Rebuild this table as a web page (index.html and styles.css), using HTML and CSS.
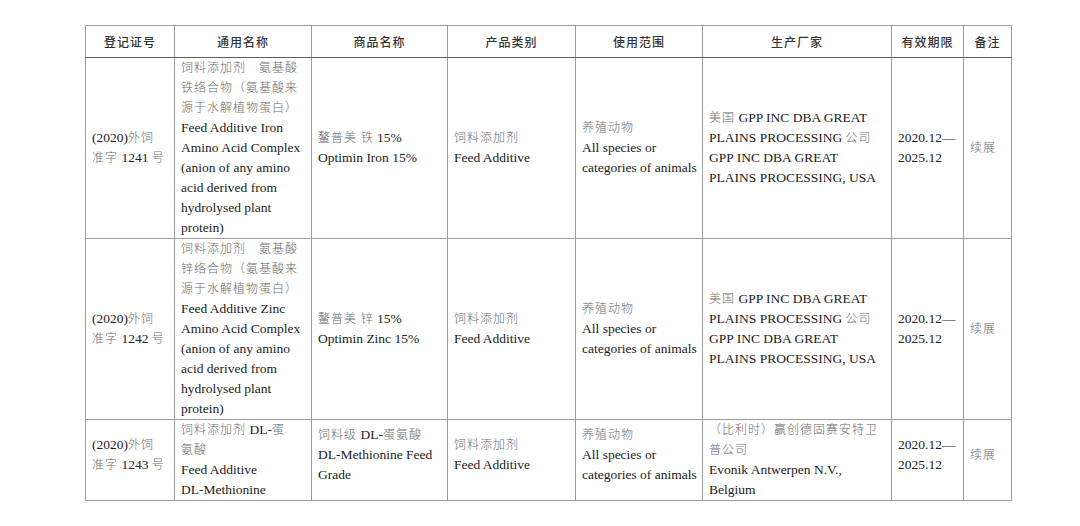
FILE: index.html
```html
<!DOCTYPE html>
<html lang="zh">
<head>
<meta charset="utf-8">
<title>登记证</title>
<link rel="stylesheet" href="styles.css">
</head>
<body>
<div class="page">
<table class="reg">
  <colgroup>
    <col class="c1"><col class="c2"><col class="c3"><col class="c4"><col class="c5"><col class="c6"><col class="c7"><col class="c8">
  </colgroup>
  <thead>
    <tr>
      <th>登记证号</th><th>通用名称</th><th>商品名称</th><th>产品类别</th><th>使用范围</th><th class="dark">生产厂家</th><th>有效期限</th><th>备注</th>
    </tr>
  </thead>
  <tbody>
    <tr class="r1">
      <td>(2020)<span class="zh">外饲</span><br><span class="zh">准字</span> 1241 <span class="zh">号</span></td>
      <td><span class="zh">饲料添加剂　氨基酸<br>铁络合物（氨基酸来<br>源于水解植物蛋白）</span><br>Feed Additive Iron<br>Amino Acid Complex<br>(anion of any amino<br>acid derived from<br>hydrolysed plant<br>protein)</td>
      <td><span class="zh">鳌普美 铁</span> 15%<br>Optimin Iron 15%</td>
      <td><span class="zh">饲料添加剂</span><br>Feed Additive</td>
      <td><span class="zh">养殖动物</span><br>All species or<br>categories of animals</td>
      <td class="dark"><span class="zh">美国</span> GPP INC DBA GREAT<br>PLAINS PROCESSING <span class="zh">公司</span><br>GPP INC DBA GREAT<br>PLAINS PROCESSING, USA</td>
      <td>2020.12—<br>2025.12</td>
      <td><span class="zh">续展</span></td>
    </tr>
    <tr class="r2">
      <td>(2020)<span class="zh">外饲</span><br><span class="zh">准字</span> 1242 <span class="zh">号</span></td>
      <td><span class="zh">饲料添加剂　氨基酸<br>锌络合物（氨基酸来<br>源于水解植物蛋白）</span><br>Feed Additive Zinc<br>Amino Acid Complex<br>(anion of any amino<br>acid derived from<br>hydrolysed plant<br>protein)</td>
      <td><span class="zh">鳌普美 锌</span> 15%<br>Optimin Zinc 15%</td>
      <td><span class="zh">饲料添加剂</span><br>Feed Additive</td>
      <td><span class="zh">养殖动物</span><br>All species or<br>categories of animals</td>
      <td class="dark"><span class="zh">美国</span> GPP INC DBA GREAT<br>PLAINS PROCESSING <span class="zh">公司</span><br>GPP INC DBA GREAT<br>PLAINS PROCESSING, USA</td>
      <td>2020.12—<br>2025.12</td>
      <td><span class="zh">续展</span></td>
    </tr>
    <tr class="r3">
      <td>(2020)<span class="zh">外饲</span><br><span class="zh">准字</span> 1243 <span class="zh">号</span></td>
      <td class="top"><span class="zh">饲料添加剂</span> DL-<span class="zh">蛋<br>氨酸</span><br>Feed Additive<br>DL-Methionine</td>
      <td><span class="zh">饲料级</span> DL-<span class="zh">蛋氨酸</span><br>DL-Methionine Feed<br>Grade</td>
      <td><span class="zh">饲料添加剂</span><br>Feed Additive</td>
      <td><span class="zh">养殖动物</span><br>All species or<br>categories of animals</td>
      <td class="dark top"><span class="zh">（比利时）赢创德固赛安特卫<br>普公司</span><br>Evonik Antwerpen N.V.,<br>Belgium</td>
      <td>2020.12—<br>2025.12</td>
      <td><span class="zh">续展</span></td>
    </tr>
  </tbody>
</table>
</div>
</body>
</html>
```

FILE: styles.css
```css
html, body {
  margin: 0;
  padding: 0;
  background: #ffffff;
}

.page {
  padding: 25px 0 0 85px;
}

.reg {
  border-collapse: collapse;
  table-layout: fixed;
  width: 926px;
  font-family: "Liberation Serif", "Noto Sans CJK SC", serif;
  font-size: 13.5px;
  line-height: 20px;
  color: #222;
}

.c1 { width: 89px; }
.c2 { width: 137px; }
.c3 { width: 136px; }
.c4 { width: 128px; }
.c5 { width: 127px; }
.c6 { width: 189px; }
.c7 { width: 72px; }
.c8 { width: 48px; }

.reg th,
.reg td {
  border: 1px solid #9d9d9d;
  padding: 0 0 0 6px;
  vertical-align: middle;
  text-align: left;
  white-space: nowrap;
  overflow: hidden;
}

.reg th {
  height: 31px;
  padding: 0;
  text-align: center;
  font-family: "Noto Sans CJK SC", sans-serif;
  font-weight: 500;
  font-size: 12px;
  line-height: 14px;
  letter-spacing: 1px;
  color: #333;
  border-bottom: 1px solid #5f5f5f;
}

.reg .dark {
  border-left: 1px solid #1e1e1e;
}

.r1 td, .r2 td { height: 180px; }
.r3 td { height: 66px; padding-bottom: 10px; }

.reg .r3 td.top {
  vertical-align: top;
  padding-bottom: 0;
  height: 76px;
}

.zh {
  font-family: "Noto Sans CJK SC", sans-serif;
  font-weight: 300;
  font-size: 12px;
  line-height: 12px;
  letter-spacing: 1px;
  color: #6b6b6b;
}
```
